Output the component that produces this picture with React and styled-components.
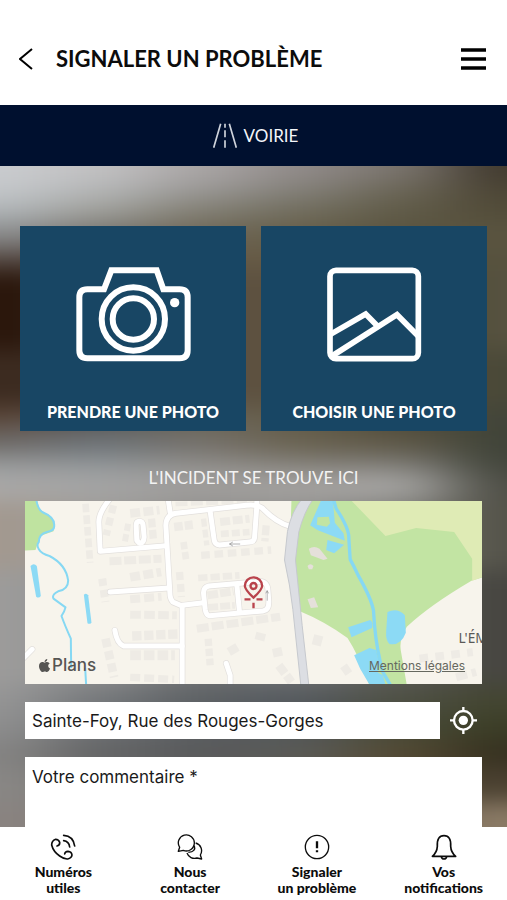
import React from "react";
import styled, { createGlobalStyle } from "styled-components";
import { FaApple } from "react-icons/fa";

const GlobalStyle = createGlobalStyle`
  *, *::before, *::after {
    box-sizing: border-box;
  }

  body {
    margin: 0;
    background: #fff;
    font-family: Lato, sans-serif;
  }

  button {
    border: 0;
    padding: 0;
    background: none;
    font-family: inherit;
    cursor: pointer;
  }
`;

const Screen = styled.div`
  display: flex;
  flex-direction: column;
  height: 100vh;
`;

const Header = styled.header`
  display: flex;
  align-items: center;
  gap: 16px;
  height: 105px;
  padding: 13px 20px 0 12px;
  background: #fff;
`;

const HeaderTitle = styled.h1`
  flex: 1;
  margin: 0;
  color: #0c0c0c;
  font-size: 22px;
  font-weight: 700;
  line-height: 28px;
`;

const HeaderButton = styled.button`
  display: flex;
  align-items: center;
  justify-content: center;
  width: 28px;
  height: 28px;
`;

const CategoryBar = styled.div`
  display: flex;
  flex-shrink: 0;
  align-items: center;
  justify-content: center;
  gap: 7px;
  height: 61px;
  padding-left: 4px;
  background: #00102f;
  color: #f4f6fa;
  font-size: 17px;
  line-height: 22px;
`;

const Body = styled.main`
  position: relative;
  flex: 1;
  min-height: 0;
  overflow: hidden;
  background: #6b6250;
`;

const BackdropSvg = styled.svg`
  position: absolute;
  inset: 0;
  width: 100%;
  height: 100%;
`;

const Scroller = styled.div`
  position: relative;
  height: 100%;
  padding: 60px 20px 0;
  overflow-y: auto;
  scrollbar-width: none;
`;

const PhotoGrid = styled.div`
  display: grid;
  grid-template-columns: 1fr 1fr;
  gap: 15px;
`;

const PhotoButton = styled.button`
  display: flex;
  flex-direction: column;
  align-items: center;
  justify-content: space-between;
  height: 205px;
  padding: 41px 8px 9px;
  background: #184664;
  color: #fff;
  font-size: 16px;
  font-weight: 900;
  line-height: 20px;
`;

const Form = styled.form`
  padding: 0 5px 40px;
`;

const SectionTitle = styled.h2`
  margin: 0;
  padding: 36px 0 12px;
  color: #f3f3f3;
  font-size: 17px;
  font-weight: 400;
  line-height: 22px;
  text-align: center;
`;

const MapCard = styled.div`
  position: relative;
  height: 183px;
  overflow: hidden;
  background: #f7f4ec;
`;

const MapSvg = styled.svg`
  display: block;
  width: 100%;
  height: 100%;
`;

const MapBrand = styled.span`
  position: absolute;
  left: 12px;
  bottom: 9px;
  display: flex;
  align-items: center;
  color: #565553;
  font-family: Inter, sans-serif;
  font-size: 17px;
  font-weight: 500;
  line-height: 20px;
`;

const LegalLink = styled.a`
  position: absolute;
  right: 17px;
  bottom: 11px;
  color: #66685f;
  font-family: Inter, sans-serif;
  font-size: 12px;
  font-weight: 400;
  line-height: 14px;
`;

const AddressRow = styled.div`
  display: flex;
  align-items: center;
  gap: 4px;
  margin: 18px 0;
`;

const AddressInput = styled.input`
  flex: 1;
  min-width: 0;
  height: 37px;
  padding: 0 7px;
  border: 0;
  border-radius: 0;
  background: #fff;
  color: #1a1a1a;
  font-family: Inter, sans-serif;
  font-size: 17px;
`;

const LocateButton = styled.button`
  display: flex;
  align-items: center;
  justify-content: center;
  width: 38px;
  height: 37px;
`;

const CommentInput = styled.textarea`
  display: block;
  width: 100%;
  height: 120px;
  padding: 10px 7px;
  border: 0;
  border-radius: 0;
  background: #fff;
  color: #1a1a1a;
  font-family: Inter, sans-serif;
  font-size: 17px;
  line-height: 20px;
  resize: none;

  &::placeholder {
    color: #1a1a1a;
    opacity: 1;
  }
`;

const BottomNav = styled.nav`
  display: grid;
  grid-template-columns: repeat(4, 1fr);
  flex-shrink: 0;
  height: 73px;
  padding-top: 7px;
  background: #fff;
`;

const NavLink = styled.a`
  display: flex;
  flex-direction: column;
  align-items: center;
  gap: 4px;
  color: #0c0c0c;
  font-size: 14px;
  font-weight: 900;
  line-height: 16px;
  text-align: center;
  text-decoration: none;
  white-space: pre-line;
`;

const StrokeIcon = styled.svg`
  display: block;
  flex-shrink: 0;
  fill: none;
  stroke: currentColor;
  stroke-width: ${(props) => props.$weight};
`;

const backdropColumns = [-120, 50, 150, 250, 350, 450, 630];

const backdropRows = [
  { y: -60, h: 74, colors: ["#cacccf", "#c2c1c2", "#aaa6a6", "#918b8a", "#7b756f", "#40392e"] },
  { y: 14, h: 20, colors: ["#c4c7ca", "#b4b6b7", "#9a9896", "#838079", "#6b6657", "#4c4535"] },
  { y: 34, h: 22, colors: ["#b0b5b8", "#9f9f9a", "#827f74", "#716d5e", "#605b48", "#524c39"] },
  { y: 56, h: 26, colors: ["#8a8b8c", "#777570", "#6e6757", "#665e49", "#5a5440", "#5a5440"] },
  { y: 82, h: 22, colors: ["#564a45", "#50463c", "#665a45", "#665a45", "#57523e", "#57523e"] },
  { y: 104, h: 80, colors: ["#2a160b", "#332015", "#5e5241", "#5c5040", "#504b3a", "#56523f"] },
  { y: 184, h: 56, colors: ["#3c2b20", "#3d2c22", "#5e5241", "#5c5040", "#504b3a", "#4a4938"] },
  { y: 240, h: 22, colors: ["#5c4638", "#555350", "#6b6555", "#645c49", "#4f4a38", "#42453a"] },
  { y: 262, h: 26, colors: ["#6c6865", "#6b7176", "#74706a", "#68614f", "#5c5645", "#3f4338"] },
  { y: 288, h: 20, colors: ["#989a9b", "#92979a", "#908e8b", "#84817b", "#7e7c77", "#42453b"] },
  { y: 308, h: 26, colors: ["#aaa9a8", "#a5a5a5", "#a19f9d", "#a6a4a2", "#a9a8a6", "#4e4e46"] },
  { y: 334, h: 70, colors: ["#a3998f", "#9d9b98", "#8f8e8c", "#8f8e8c", "#7a7974", "#545349"] },
  { y: 404, h: 116, colors: ["#9d9c9b", "#8f9091", "#707274", "#707274", "#5b5b55", "#464540"] },
  { y: 520, h: 28, colors: ["#969696", "#74777a", "#5c6063", "#54595e", "#4e5044", "#434530"] },
  { y: 548, h: 26, colors: ["#8e8e8e", "#6f7276", "#5b5f63", "#52575a", "#484b38", "#3b3d26"] },
  { y: 574, h: 28, colors: ["#858483", "#626364", "#58595a", "#5a5a56", "#544a33", "#35301f"] },
  { y: 602, h: 34, colors: ["#8a8886", "#777674", "#666", "#5f5b52", "#544a38", "#4a4030"] },
  { y: 636, h: 84, colors: ["#8a8481", "#807a76", "#777", "#6f675c", "#7b6c59", "#8b7b66"] },
];

const roads = [
  "M330 222 Q298 262 298 290 L302 378 L500 361",
  "M506 222 L512 262",
  "M548 776 V542 L520 530 Q511 520 511 500 L499 300 Q500 268 530 264 L740 240 Q770 236 788 248 Q830 292 872 303",
  "M772 222 V242 L765 338 Q764 349 750 350 L660 359 Q646 358 644 344 L632 258",
  "M412 346 L410 300 Q410 288 420 288 Q430 288 431 302 L434 335 Q433 352 422 354 Q412 352 412 335",
  "M332 500 L508 488",
  "M548 540 L612 532",
  "M612 502 Q612 486 628 482 L768 470 Q800 462 805 490 L808 530 Q808 555 790 557 L630 571 Q620 570 617 552 Z",
  "M712 478 L720 560",
  "M346 615 Q352 654 372 662 H548",
  "M680 714 L692 750 V780",
  "M70 700 L98 672",
];

// rows of houses: path, thickness of the row, dash pattern
const houses = [
  ["M258 235 L272 412", 20, "26 9"],
  ["M342 240 L320 330", 22, "24 14"],
  ["M392 264 L480 254", 26, "30 10"],
  ["M386 295 L376 350", 18, "22 10"],
  ["M456 280 L462 346", 22, "26 8"],
  ["M330 408 L486 400", 24, "36 8"],
  ["M392 456 L485 440", 26, "30 10"],
  ["M308 460 L318 530", 24, "22 12"],
  ["M392 522 L486 514", 24, "30 12"],
  ["M392 568 L532 570", 24, "32 10"],
  ["M398 632 L534 626", 28, "28 8"],
  ["M392 690 L526 690", 30, "32 9"],
  ["M318 640 L344 756", 26, "26 12"],
  ["M392 756 L524 762", 22, "30 12"],
  ["M524 305 L580 298", 26, "26 6"],
  ["M552 350 L560 405", 20, "22 8"],
  ["M540 440 L546 515", 22, "24 12"],
  ["M528 236 L742 228", 14, "36 10"],
  ["M662 290 L750 280", 24, "30 8"],
  ["M664 326 L750 320", 20, "24 9"],
  ["M612 280 L622 360", 16, "24 9"],
  ["M605 390 L815 374", 22, "26 14"],
  ["M596 458 L720 450", 20, "28 9"],
  ["M624 510 L702 498", 24, "32 6"],
  ["M626 546 L706 540", 20, "30 6"],
  ["M592 610 L842 574", 24, "36 9"],
  ["M626 640 L632 720", 22, "22 8"],
  ["M688 680 L722 660", 26, "30 20"],
  ["M768 630 L806 640", 22, "30 10"],
  ["M820 684 L848 678", 26, "30 20"],
  ["M838 720 L876 770", 26, "30 8"],
  ["M800 300 L796 348", 22, "30 8"],
  ["M950 660 L958 630", 28, "40 8"],
  ["M1030 740 L1050 726", 28, "30 8"],
  ["M1260 700 L1420 680", 24, "26 22"],
  ["M1370 756 L1430 740", 24, "34 14"],
];

const waters = [
  "M966 222 L932 300 L955 315 L1036 346 L1032 324 L1006 292 L1000 222 Z",
  "M984 344 L1034 358 L1004 384 L980 374 Z",
  "M1046 606 L1112 584 Q1122 592 1118 608 L1056 636 Z",
  "M1164 560 Q1194 546 1216 570 L1219 622 Q1204 662 1170 656 Q1158 646 1160 618 Z",
  "M1064 690 L1110 668 L1130 674 L1138 710 L1136 742 L1150 750 L1158 778 H1110 L1082 730 Z",
  "M93 422 Q103 412 112 422 L124 512 Q118 520 110 514 Z",
  "M253 508 Q261 502 266 510 L276 592 Q270 598 264 594 Z",
];

function Backdrop() {
  return (
    <BackdropSvg viewBox="0 0 507 661" preserveAspectRatio="none" aria-hidden="true">
      <defs>
        <filter id="soft" x="0" y="0" width="1" height="1" colorInterpolationFilters="sRGB">
          <feGaussianBlur stdDeviation="36 11" />
        </filter>
      </defs>
      <g filter="url(#soft)">
        {backdropRows.map((row) =>
          row.colors.map((color, i) => (
            <rect
              key={`${row.y}-${i}`}
              x={backdropColumns[i]}
              y={row.y}
              width={backdropColumns[i + 1] - backdropColumns[i] + 1}
              height={row.h + 1}
              fill={color}
            />
          ))
        )}
      </g>
    </BackdropSvg>
  );
}

function IncidentMap() {
  return (
    <MapSvg
      viewBox="76 227 1372 549"
      preserveAspectRatio="xMidYMid slice"
      role="img"
      aria-label="Sainte-Foy, Rue des Rouges-Gorges"
    >
      <rect x="76" y="227" width="1372" height="549" fill="#f7f4ec" />
      <path d="M70 220 H112 L120 252 L158 278 L166 300 L162 318 L122 332 L108 374 L70 376 Z" fill="#bfe3a0" />
      <path
        d="M876 220 H1450 V456 L1416 466 Q1290 540 1222 604 Q1198 640 1204 676 L1222 780 H1110 Q1078 690 1044 638 Q980 590 898 556 L870 420 Z"
        fill="#c2e4a3"
      />
      <path d="M1050 220 L1158 332 L1250 308 L1364 320 L1418 400 V466 L1450 455 V220 Z" fill="#dfebb5" />
      <g fill="none" stroke="#eeebe5">
        {houses.map(([d, width, dash]) => (
          <path key={d} d={d} strokeWidth={width} strokeDasharray={dash} />
        ))}
      </g>
      <g fill="none" stroke="#e2dfdc" strokeWidth="19" strokeLinecap="round" strokeLinejoin="round">
        {roads.map((d) => (
          <path key={d} d={d} />
        ))}
      </g>
      <g fill="none" stroke="#fff" strokeWidth="15" strokeLinecap="round" strokeLinejoin="round">
        {roads.map((d) => (
          <path key={d} d={d} />
        ))}
      </g>
      <g fill="#8cdaf5">
        {waters.map((d) => (
          <path key={d} d={d} />
        ))}
      </g>
      <path d="M954 276 L988 274 L992 294 L982 304 L952 298 Z" fill="#c2e4a3" />
      <g fill="none" stroke="#86d8f3" strokeLinejoin="round">
        <path
          d="M110 222 Q114 250 128 260 Q166 276 164 300 Q166 316 142 320 Q118 326 118 350 Q110 358 118 372 Q126 386 150 392 Q200 418 206 466 Q206 492 176 498 Q156 508 162 520 L198 546 Q196 556 186 572 Q196 600 214 640 L215 728 M257 728 L260 780"
          strokeWidth="6"
        />
        <path
          d="M1002 222 L1010 250 Q1050 310 1048 340 L1052 402 Q1064 424 1076 450 Q1116 520 1122 556 Q1126 640 1142 708 L1150 740 L1172 778"
          strokeWidth="10"
        />
      </g>
      <g fill="#e5e0da">
        <path d="M928 370 Q944 360 960 370 L984 400 L972 404 L934 390 Z" />
        <path d="M924 422 Q932 412 942 422 L938 432 L928 432 Z" />
        <path d="M924 522 L944 516 L956 546 L934 548 Z" />
      </g>
      <path
        d="M908 220 Q876 258 864 318 L855 404 Q872 480 880 552 L904 780 H928 L908 600 L888 404 L898 320 Q914 258 942 220 Z"
        fill="#dcdee3"
        stroke="#c6c9ce"
        strokeWidth="3"
      />
      <g fill="none" stroke="#8b8b8b" strokeWidth="2">
        <path d="M690 356 H722 M700 350 L690 356 L700 362 M803 526 V496 M799 504 L803 496 L807 504" />
      </g>
      <g fill="none" stroke="#b9434c" strokeWidth="7">
        <path d="M762 517 Q737 494 736 482 A26 26 0 1 1 788 482 Q787 494 762 517 Z" />
        <circle cx="762" cy="482" r="9" />
        <path d="M735 522 H753 M771 522 H789 M762 532 V549" />
      </g>
      <text x="1377" y="653" fill="#5a5957" fontFamily="'Noto Sans', sans-serif" fontSize="41">
        L'ÉM
      </text>
    </MapSvg>
  );
}

function PhoneIcon() {
  return (
    <StrokeIcon viewBox="93 27 78 78" width="26" height="26" $weight={5} strokeLinecap="round" strokeLinejoin="round">
      <path d="M114 63 Q123 61 122 52 Q119 43 110 43 Q98 47 98 60 Q103 80 122 93 Q136 103 146 102 Q158 99 159 90 Q158 80 147 79 Q138 80 137 87" />
      <path d="M134 47 Q150 49 152 66 M134 31 Q163 33 167 63" />
    </StrokeIcon>
  );
}

function ChatIcon() {
  return (
    <StrokeIcon viewBox="473 27 78 78" width="26" height="26" $weight={4} strokeLinejoin="round">
      <path d="M481 67 A24 24 0 1 1 492 76 L477 79 Z" />
      <path d="M529 54 A24 24 0 0 1 543 90 L547 102 L533 99 A24 24 0 0 1 503 84" />
      <path d="M525 62 Q531 80 507 82" />
    </StrokeIcon>
  );
}

function AlertIcon() {
  return (
    <StrokeIcon viewBox="132 28 78 78" width="26" height="26" $weight={4}>
      <circle cx="171" cy="67" r="35" />
      <path d="M171 50 V71 M171 77 V83" strokeWidth="7" />
    </StrokeIcon>
  );
}

function BellIcon() {
  return (
    <StrokeIcon viewBox="512 27 78 78" width="26" height="26" $weight={5} strokeLinejoin="round">
      <path d="M516 94 Q530 82 531 64 Q529 32 551 32 Q573 32 571 64 Q572 82 586 94 Z" />
      <path d="M543 94 Q544 102 551 102 Q558 102 559 94" />
    </StrokeIcon>
  );
}

const navItems = [
  { label: "Numéros\nutiles", icon: PhoneIcon, href: "#numeros" },
  { label: "Nous\ncontacter", icon: ChatIcon, href: "#contact" },
  { label: "Signaler\nun problème", icon: AlertIcon, href: "#signaler" },
  { label: "Vos\nnotifications", icon: BellIcon, href: "#notifications" },
];

export default function App() {
  return (
    <>
      <GlobalStyle />
      <Screen>
        <Header>
          <HeaderButton type="button" aria-label="Retour">
            <StrokeIcon viewBox="0 0 14 22" width="14" height="22" $weight={2}>
              <path d="M13 1 L1 11 L13 21" />
            </StrokeIcon>
          </HeaderButton>
          <HeaderTitle>SIGNALER UN PROBLÈME</HeaderTitle>
          <HeaderButton type="button" aria-label="Menu">
            <StrokeIcon viewBox="0 0 75 66" width="25" height="22" $weight={11}>
              <path d="M0 6 H75 M0 33 H75 M0 60 H75" />
            </StrokeIcon>
          </HeaderButton>
        </Header>
        <CategoryBar>
          <StrokeIcon viewBox="0 0 72 75" width="24" height="25" $weight={5} opacity="0.85">
            <path d="M2 74 L23 2 M70 74 L49 2 M36 2 V14 M36 22 V43 M36 52 V74" />
          </StrokeIcon>
          VOIRIE
        </CategoryBar>
        <Body>
          <Backdrop />
          <Scroller>
            <PhotoGrid>
              <PhotoButton type="button">
                <StrokeIcon viewBox="48 50 345 285" width="115" height="95" $weight={18}>
                  <path d="M82 117 H132 L154 60 H290 L310 117 H359 Q383 117 383 141 V300 Q383 324 359 324 H82 Q58 324 58 300 V141 Q58 117 82 117 Z" />
                  <circle cx="220" cy="206" r="95" />
                  <circle cx="220" cy="206" r="62" />
                  <circle cx="344" cy="157" r="14" fill="currentColor" stroke="none" />
                </StrokeIcon>
                PRENDRE UNE PHOTO
              </PhotoButton>
              <PhotoButton type="button">
                <StrokeIcon viewBox="81 50 285 285" width="95" height="95" $weight={17}>
                  <rect x="90" y="60" width="265" height="265" rx="18" />
                  <path d="M90 253 L197 191 L233 228 M96 317 L291 193 L355 258" />
                </StrokeIcon>
                CHOISIR UNE PHOTO
              </PhotoButton>
            </PhotoGrid>
            <Form>
              <SectionTitle>L'INCIDENT SE TROUVE ICI</SectionTitle>
              <MapCard>
                <IncidentMap />
                <MapBrand>
                  <FaApple size={15} />
                  Plans
                </MapBrand>
                <LegalLink href="#mentions">Mentions légales</LegalLink>
              </MapCard>
              <AddressRow>
                <AddressInput aria-label="Adresse" defaultValue="Sainte-Foy, Rue des Rouges-Gorges" />
                <LocateButton type="button" aria-label="Me localiser">
                  <StrokeIcon viewBox="0 0 81 81" width="27" height="27" $weight={7} color="#fff">
                    <circle cx="40" cy="40" r="28" />
                    <circle cx="40" cy="40" r="14" fill="currentColor" stroke="none" />
                    <path d="M40 0 V14 M40 67 V81 M0 40 H14 M67 40 H81" />
                  </StrokeIcon>
                </LocateButton>
              </AddressRow>
              <CommentInput aria-label="Votre commentaire" placeholder="Votre commentaire *" />
            </Form>
          </Scroller>
        </Body>
        <BottomNav>
          {navItems.map(({ label, icon: Icon, href }) => (
            <NavLink key={label} href={href}>
              <Icon />
              {label}
            </NavLink>
          ))}
        </BottomNav>
      </Screen>
    </>
  );
}
